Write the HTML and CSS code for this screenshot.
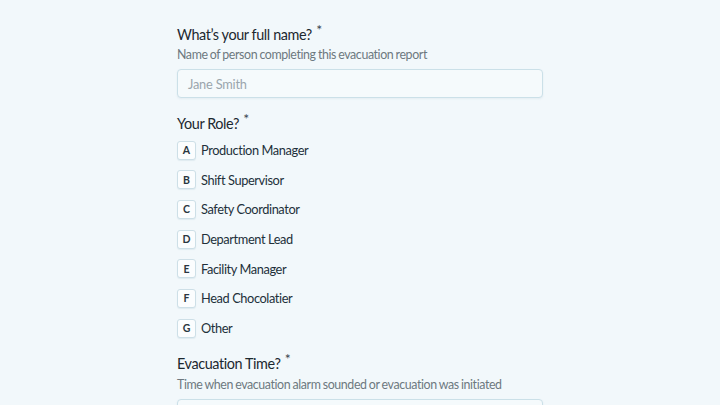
FILE: index.html
```html
<!DOCTYPE html>
<html>
<head>
<meta charset="utf-8">
<link rel="stylesheet" href="styles.css">
</head>
<body>
<main class="form">
  <section class="field">
    <h2 class="label">What’s your full name? <span class="req">*</span></h2>
    <p class="desc">Name of person completing this evacuation report</p>
    <div class="input"><span class="ph">Jane Smith</span></div>
  </section>

  <section class="field role">
    <h2 class="label">Your Role? <span class="req">*</span></h2>
    <ul class="options">
      <li class="opt"><span class="key">A</span><span class="txt">Production Manager</span></li>
      <li class="opt"><span class="key">B</span><span class="txt">Shift Supervisor</span></li>
      <li class="opt"><span class="key">C</span><span class="txt">Safety Coordinator</span></li>
      <li class="opt"><span class="key">D</span><span class="txt">Department Lead</span></li>
      <li class="opt"><span class="key">E</span><span class="txt">Facility Manager</span></li>
      <li class="opt"><span class="key">F</span><span class="txt">Head Chocolatier</span></li>
      <li class="opt"><span class="key">G</span><span class="txt">Other</span></li>
    </ul>
  </section>

  <section class="field time">
    <h2 class="label">Evacuation Time? <span class="req">*</span></h2>
    <p class="desc">Time when evacuation alarm sounded or evacuation was initiated</p>
    <div class="input with-icon">
      <span class="ph"></span>
      <svg class="clock" width="12" height="12" viewBox="0 0 12 12"><circle cx="6" cy="6" r="4.8" fill="none" stroke="#7a868e" stroke-width="1.3"/><path d="M6 3.5V6l1.6 1" fill="none" stroke="#7a868e" stroke-width="1.3"/></svg>
    </div>
  </section>
</main>
</body>
</html>
```
FILE: styles.css
```css
html, body {
  margin: 0;
  padding: 0;
  background: #f2f8fb;
  height: 405px;
  overflow: hidden;
}
body {
  font-family: "Lato", "Noto Sans", sans-serif;
  color: #2a3640;
}
.form {
  width: 366px;
  margin: 0 auto;
  padding-top: 20px;
}
.field { margin: 0; }
.label {
  margin: 0;
  font-size: 14.4px;
  line-height: 20px;
  font-weight: 400;
  color: #1c2830;
  letter-spacing: -0.4px;
}
.req {
  font-size: 14px;
  vertical-align: 5px;
  margin-left: 1px;
  color: #3a4650;
}
.desc {
  margin: 1px 0 5px;
  font-size: 12.4px;
  line-height: 18px;
  color: #6d7880;
  letter-spacing: -0.4px;
  word-spacing: -0.5px;
}
.input {
  box-sizing: border-box;
  height: 29px;
  border: 1px solid #cbe0e8;
  border-radius: 4px;
  background: #f5fafc;
  display: flex;
  align-items: center;
  padding: 0 10px;
  box-shadow: 0 1px 2px rgba(120,160,180,0.12);
}
.ph {
  font-size: 12.8px;
  color: #9aa5ac;
  letter-spacing: -0.2px;
  flex: 1;
}
.with-icon .clock { margin-top: 14px; margin-right: -1px; }
.role { margin-top: 11px; }
.options {
  list-style: none;
  margin: 7px 0 0;
  padding: 0;
  display: flex;
  flex-direction: column;
  gap: 11.7px;
}
.opt {
  display: flex;
  align-items: center;
  height: 18px;
}
.key {
  box-sizing: border-box;
  width: 19px;
  height: 19px;
  border: 1px solid #cddfe7;
  border-radius: 3px;
  background: #fbfdfe;
  display: flex;
  align-items: center;
  justify-content: center;
  font-size: 10.5px;
  font-weight: 700;
  color: #2a3640;
  box-shadow: 0 1px 1px rgba(120,160,180,0.15);
}
.txt {
  margin-left: 5px;
  font-size: 12.8px;
  color: #22303a;
  letter-spacing: -0.4px;
}
.time { margin-top: 12px; }
.time .desc { margin-top: 2px; }
```
